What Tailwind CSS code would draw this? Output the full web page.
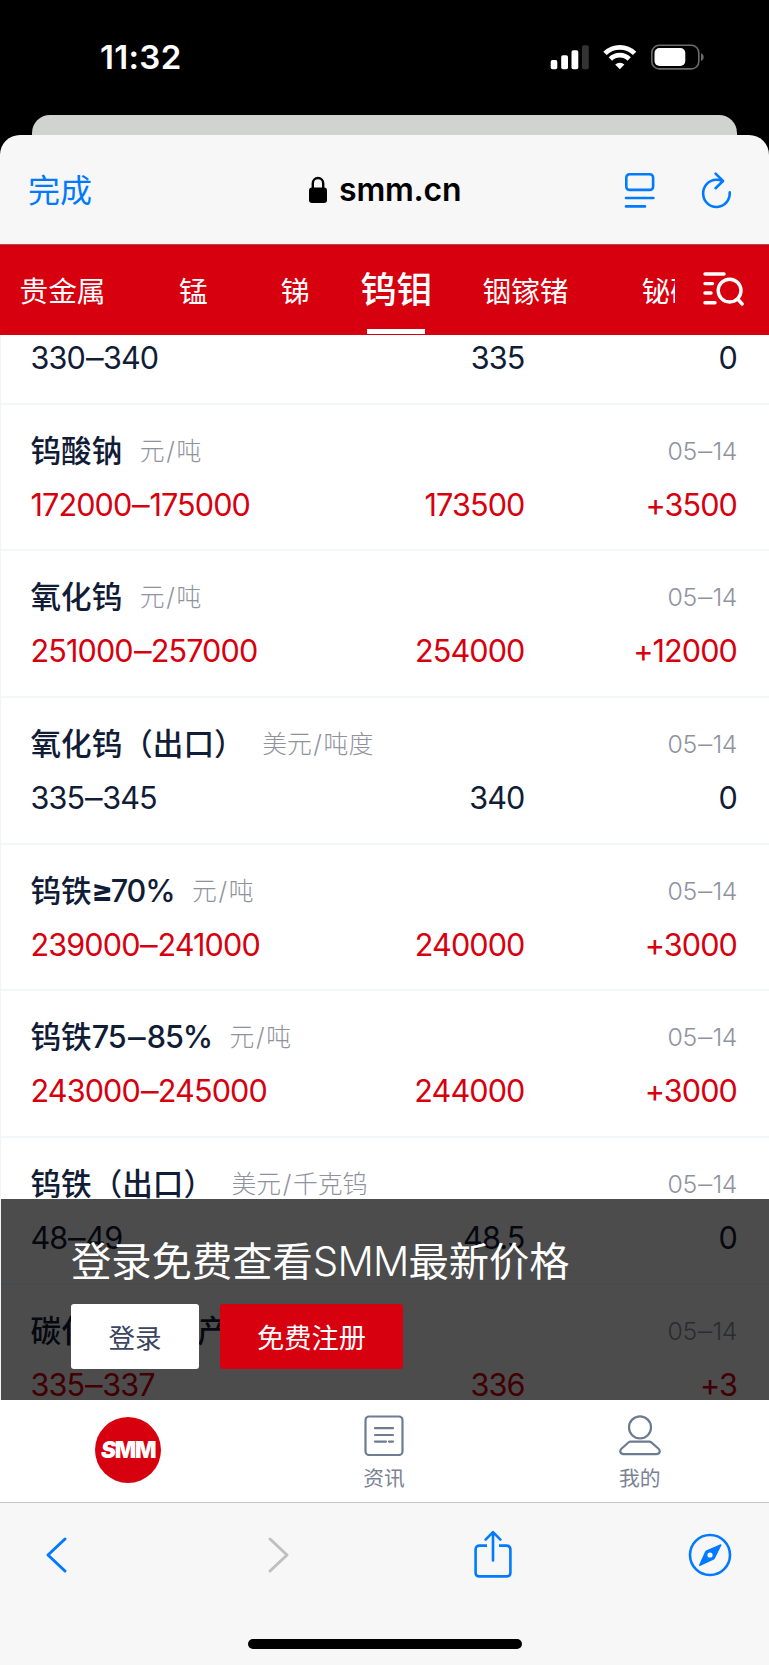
<!DOCTYPE html>
<html lang="zh-CN">
<head>
  <meta charset="UTF-8" />
  <meta name="viewport" content="width=device-width, initial-scale=1" />
  <title>smm.cn</title>
  <script src="https://cdn.jsdelivr.net/npm/@tailwindcss/browser@4"></script>
</head>
<body class="bg-black font-['Inter','Noto_Sans_CJK_SC',sans-serif]">
<div class="w-[769px] h-[1665px] flex flex-col overflow-hidden">

  <!-- Status bar -->
  <div class="h-[115px] shrink-0 flex justify-between pl-[100px] pr-[64px] text-white">
    <div class="h-[115px] leading-[115px] text-[33px] font-semibold tracking-[0.3px]">11:32</div>
    <svg class="w-[155px] h-[30px] mt-[42px]" viewBox="0 0 155 30" fill="none">
      <rect x="0.7" y="18" width="6.6" height="9.3" rx="1.8" fill="#fff"/>
      <rect x="11.2" y="13.3" width="6.8" height="14" rx="1.8" fill="#fff"/>
      <rect x="21.5" y="8.3" width="6.8" height="19" rx="1.8" fill="#fff"/>
      <rect x="32" y="3.3" width="6.8" height="24" rx="1.8" fill="#333"/>
      <g stroke="#fff" stroke-width="4.8">
        <path d="M55 11.4a21 21 0 0 1 29.6 0"/>
        <path d="M60.4 17a13.4 13.4 0 0 1 18.8 0"/>
      </g>
      <path d="M69.8 27.2l-4.6-4.7a6.6 6.6 0 0 1 9.2 0z" fill="#fff"/>
      <rect x="101.8" y="3.3" width="47" height="23.6" rx="7.5" stroke="#6b6b68" stroke-width="1.6"/>
      <rect x="104.5" y="6" width="30.8" height="18" rx="5" fill="#fff"/>
      <path d="M151 11.3c3.6 1.4 3.6 6.4 0 7.8z" fill="#6b6b68"/>
    </svg>
  </div>

  <!-- Card behind the sheet -->
  <div class="h-5 shrink-0 mx-8 rounded-t-[18px] bg-[#d1d3d0]"></div>

  <!-- Browser sheet -->
  <div class="h-[109px] shrink-0 flex items-center rounded-t-[20px] bg-[#f7f7f7] px-7">
    <div class="w-[280px] h-10 leading-10 mt-[2px] text-[32px] text-[#007aff]">完成</div>
    <div class="flex items-center mt-px w-[160px]">
      <svg class="w-[20px] h-[28px] shrink-0" viewBox="0 0 20 28">
        <rect x="1" y="11.5" width="18" height="15.5" rx="3" fill="#000"/>
        <path d="M4.8 12V7.4a5.2 5.4 0 0 1 10.4 0V12" fill="none" stroke="#000" stroke-width="2.4"/>
      </svg>
      <div class="ml-[11px] text-[32px] font-semibold tracking-[-0.2px]">smm.cn</div>
    </div>
    <svg class="w-[32px] h-[38px] ml-[156px] mt-[2px]" viewBox="0 0 32 38" fill="none" stroke="#007aff" stroke-width="2.6" stroke-linecap="round">
      <rect x="2.3" y="2.3" width="26.8" height="15.6" rx="3.2"/>
      <path d="M2 26h27.4M2 34.4h19"/>
    </svg>
    <svg class="w-[32px] h-[38px] ml-[45px] mt-[2px]" viewBox="0 0 32 38" fill="none" stroke="#007aff" stroke-width="2.6" stroke-linecap="round" stroke-linejoin="round">
      <path d="M28.7 20.4A13.3 13.6 0 1 1 15.4 7.8Q18.5 7.8 21.5 9"/>
      <path d="M14.6 1.6l7.4 7.4-7.4 7.2"/>
    </svg>
  </div>

  <!-- Category tabs -->
  <nav class="h-[91px] shrink-0 flex items-center bg-[#d7000f] border-t border-[#b8474d] text-white">
    <div class="w-[675px] h-full flex items-center overflow-hidden whitespace-nowrap text-[28.7px] pl-[19.5px]">
      <span class="pt-[3px]">贵金属</span>
      <span class="ml-[73.5px] pt-[3px]">锰</span>
      <span class="ml-[73px] pt-[3px]">锑</span>
      <div class="relative h-full ml-[51px] flex items-center text-[36px] font-medium">
        <span class="-mt-px">钨钼</span>
        <i class="absolute bottom-[1px] left-[7px] w-[58px] h-[5px] bg-white"></i>
      </div>
      <span class="ml-[50px] pt-[3px]">铟镓锗</span>
      <span class="ml-[73px] pt-[3px]">铋硒碲</span>
    </div>
    <svg class="w-[44px] h-[36px] ml-[27px] -mt-[2px]" viewBox="0 0 44 36" fill="none" stroke="#fff" stroke-width="3.4" stroke-linecap="round">
      <path d="M3 3h19M3 12.6h7.5M3 22h6M3 31.8h10"/>
      <circle cx="27.6" cy="19.6" r="11.4"/>
      <path d="M35.6 28l4.6 5"/>
    </svg>
  </nav>

  <!-- Price list -->
  <main class="h-[1065px] shrink-0 overflow-hidden bg-white border-l border-[#f1f5fa] relative">
    <div id="rows" class="-mt-[77px]"></div>

    <!-- Login prompt -->
    <div class="absolute left-0 right-0 bottom-0 h-[201px] bg-black/70 pl-[70px]">
      <div class="h-[60px] mt-[33px] leading-[60px] text-[40.3px] text-white whitespace-nowrap">登录免费查看<span class="font-[350] tracking-[-0.8px]">SMM</span>最新价格</div>
      <div class="flex gap-[21px] mt-[12px]">
        <button class="w-[128px] h-[65px] pt-[5px] rounded-[3px] bg-white text-[#3a4560] text-[26.5px]">登录</button>
        <button class="w-[183px] h-[65px] pt-[5px] rounded-[3px] bg-[#d7000f] text-white text-[27.2px]">免费注册</button>
      </div>
    </div>
  </main>

  <!-- Site tab bar -->
  <div class="h-[102px] shrink-0 grid grid-cols-3 bg-white text-[20.8px] text-[#7c8296]">
    <div class="flex justify-center pt-[17px]">
      <div class="size-[66px] rounded-full bg-[#d7000f] text-white flex items-center justify-center">
        <span class="font-black text-[22.5px] tracking-[-1.2px]"><i>S</i>MM</span>
      </div>
    </div>
    <div class="flex flex-col items-center pt-[15px] -ml-px">
      <svg class="w-[40px] h-[41px]" viewBox="0 0 40 41" fill="none" stroke="#6b7c93" stroke-width="2.2" stroke-linecap="round">
        <rect x="1.5" y="1.5" width="37" height="38.5" rx="3.6"/>
        <path d="M11 13.2h18M11 20h18M11 26.6h11M25 26.6h4"/>
      </svg>
      <span class="leading-[30px] mt-[8px]">资讯</span>
    </div>
    <div class="flex flex-col items-center pt-[15px] -ml-px mr-px">
      <svg class="w-[42px] h-[41px]" viewBox="0 0 42 41" fill="none" stroke="#6b7c93" stroke-width="2.2" stroke-linejoin="round">
        <circle cx="21" cy="12.4" r="11"/>
        <path d="M11.5 26.6h19q1 0 1.8.7l7 6.2c2.6 2.4 1.4 5.6-1.8 5.6h-33c-3.2 0-4.4-3.2-1.8-5.6l7-6.2q.8-.7 1.8-.7z"/>
      </svg>
      <span class="leading-[30px] mt-[8px]">我的</span>
    </div>
  </div>

  <!-- Browser toolbar -->
  <div class="h-[163px] shrink-0 bg-[#f7f7f7] border-t border-[#c4c4c4] flex flex-col items-center">
    <div class="w-full h-[104px] flex items-center pl-[45px] pr-[37px]">
      <svg class="w-[23px] h-[38px]" viewBox="0 0 23 38" fill="none" stroke="#007aff" stroke-width="3" stroke-linecap="round" stroke-linejoin="round"><path d="M20 3L3 19l17 16"/></svg>
      <svg class="w-[23px] h-[38px] ml-[199px]" viewBox="0 0 23 38" fill="none" stroke="#bfbfbf" stroke-width="3" stroke-linecap="round" stroke-linejoin="round"><path d="M3 3l17 16L3 35"/></svg>
      <svg class="w-[38px] h-[48px] ml-[183.5px] -mt-[2px]" viewBox="0 0 38 48" fill="none" stroke="#007aff" stroke-width="2.6" stroke-linecap="round" stroke-linejoin="round">
        <path d="M13 15.6H5.6Q1.6 15.6 1.6 19.6V42.4Q1.6 46.4 5.6 46.4H32.4Q36.4 46.4 36.4 42.4V19.6Q36.4 15.6 32.4 15.6H25" stroke-linecap="butt"/>
        <path d="M19 30.5V2.5M11.6 9.6L19 2.2l7.4 7.4"/>
      </svg>
      <svg class="w-[44px] h-[44px] ml-auto" viewBox="0 0 44 44">
        <circle cx="22" cy="22" r="20" fill="none" stroke="#007aff" stroke-width="2.6"/>
        <path d="M32.4 11.2L18 17.6q-.6.3-.9.9L11 32q-.2 1.2 1 1L26 26.4q.6-.3.9-.9L33.4 12.2q.2-1.2-1-1z" fill="#007aff"/>
        <circle cx="22" cy="22" r="2.6" fill="#f7f7f7"/>
      </svg>
    </div>
    <div class="w-[274px] h-[10px] mt-[32px] rounded-full bg-black"></div>
  </div>
</div>

<script>
  // name, unit, range, average, change
  const prices = [
    ["钨精矿", "美元/吨度", "330–340", "335", "0"],
    ["钨酸钠", "元/吨", "172000–175000", "173500", "+3500"],
    ["氧化钨", "元/吨", "251000–257000", "254000", "+12000"],
    ["氧化钨（出口）", "美元/吨度", "335–345", "340", "0"],
    ["钨铁≥70%", "元/吨", "239000–241000", "240000", "+3000"],
    ["钨铁75–85%", "元/吨", "243000–245000", "244000", "+3000"],
    ["钨铁（出口）", "美元/千克钨", "48–49", "48.5", "0"],
    ["碳化钨粉-国产", "元/千克", "335–337", "336", "+3"],
  ];

  // wider dash with a little air around it
  const dash = text => text.replace("–", '<span class="inline-block scale-x-115 mx-[1.8px]">–</span>');
  const title = text => text
    .replace(/\d+.*%/, m => `<span class="tracking-[-1.1px]">${m}</span>`)
    .replace("–", '<span class="inline-block scale-x-115 mx-[3.5px]">–</span>')
    .replace("≥", '<b class="font-extrabold tracking-[-2px]">≥</b>');

  document.getElementById("rows").innerHTML = prices.map(([name, unit, range, avg, diff]) => `
    <div class="h-[146.67px] border-b-2 border-[#f3f7fc] pl-[29.5px] pr-8 pt-[19px] whitespace-nowrap">
      <div class="h-[54px] flex items-center">
        <span class="text-[30.6px] leading-[54px] font-medium text-[#111c36]">${title(name)}</span>
        <span class="ml-[17.5px] text-[24.8px] leading-[54px] font-light text-[#90939e]">${unit.replace("/", '<span class="mx-[1.6px]">/</span>')}</span>
        <span class="ml-auto text-[24.8px] leading-[54px] font-light text-[#90939e] tracking-[-0.4px]">${dash("05–14")}</span>
      </div>
      <div class="grid grid-cols-[270px_224px_1fr] h-[54px] leading-[54px] text-[30.6px] font-[380] tracking-[-0.9px] ${diff === "0" ? "text-[#111c36]" : "text-[#d7000f]"}">
        <span>${dash(range)}</span>
        <span class="text-right">${avg}</span>
        <span class="text-right">${diff}</span>
      </div>
    </div>`).join("");
</script>
</body>
</html>
